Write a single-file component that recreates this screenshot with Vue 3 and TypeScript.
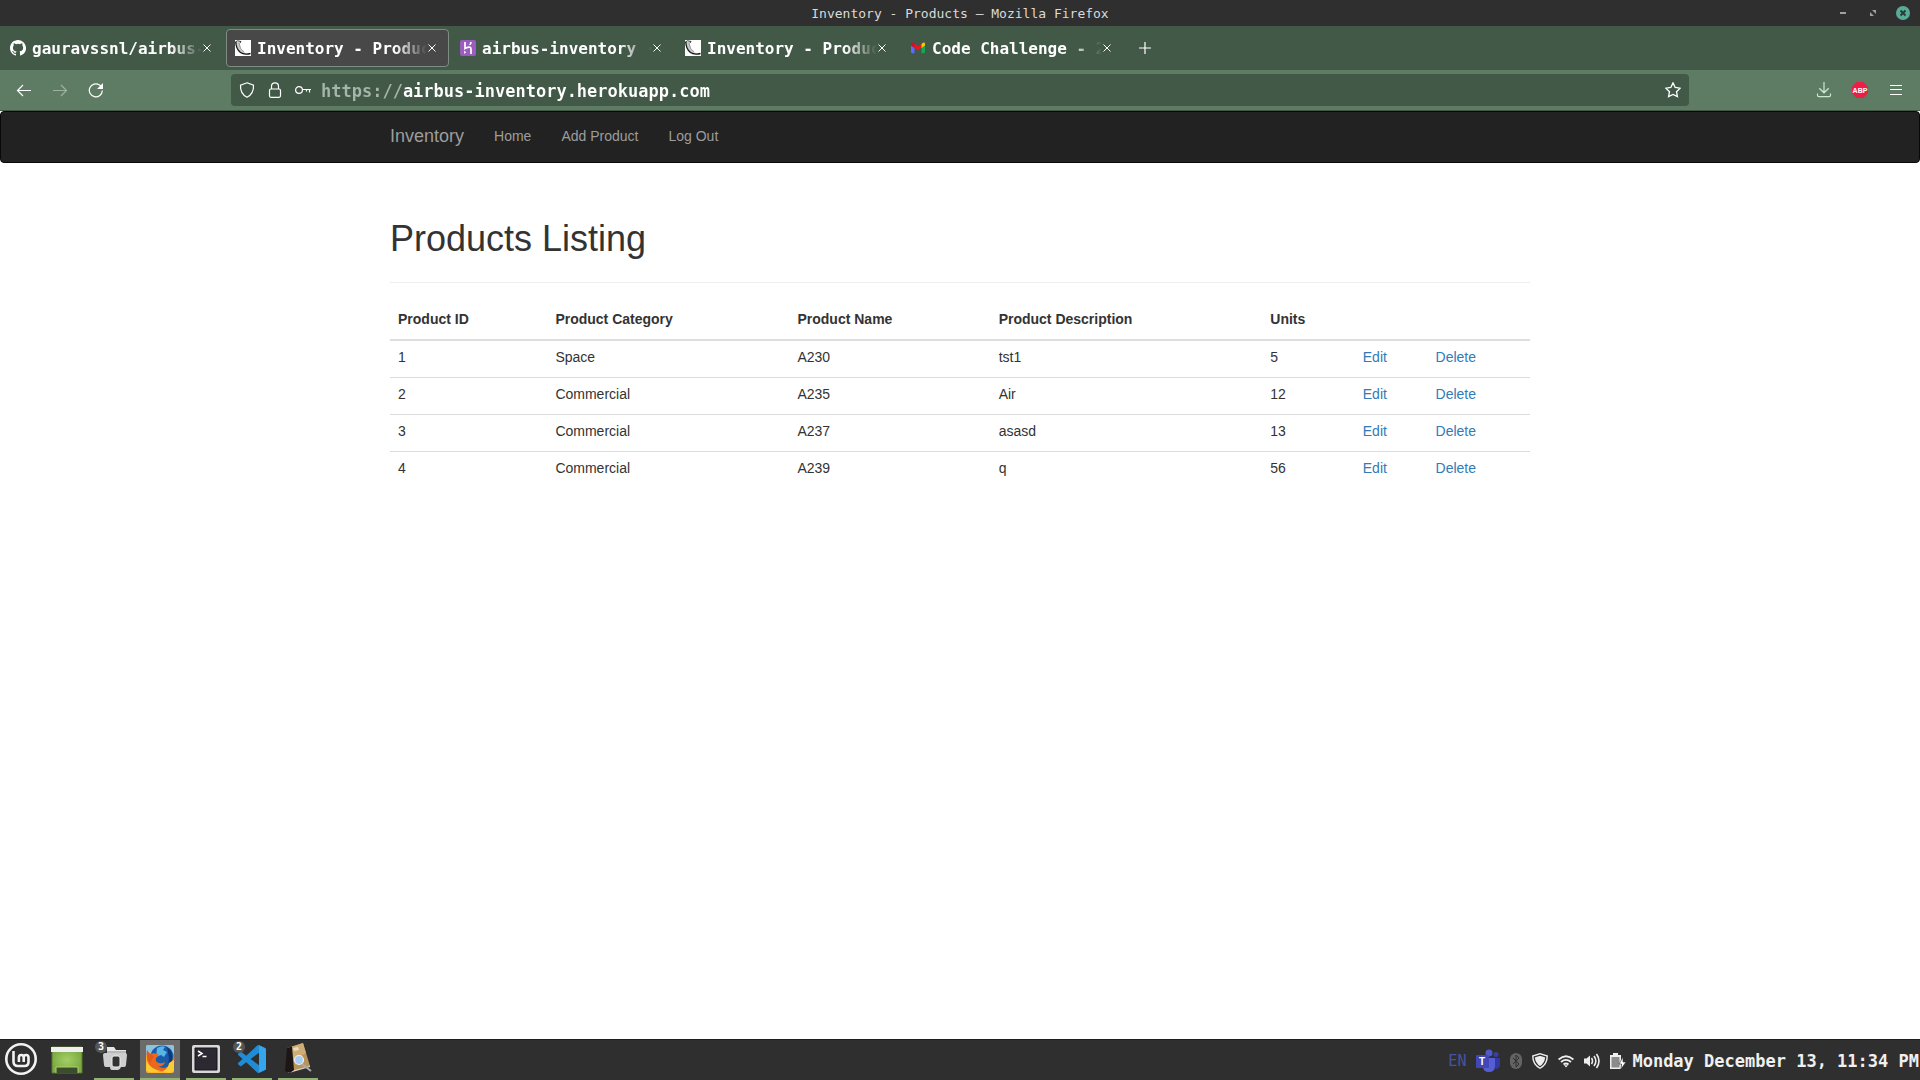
<script setup lang="ts">
import { ref } from 'vue'

interface Tab {
  title: string
  icon: 'github' | 'flask' | 'heroku' | 'gmail'
  active?: boolean
}

interface Product {
  id: number
  category: string
  name: string
  description: string
  units: number
}

const tabs: Tab[] = [
  { title: 'gauravssnl/airbus-', icon: 'github' },
  { title: 'Inventory - Produc', icon: 'flask', active: true },
  { title: 'airbus-inventory ·', icon: 'heroku' },
  { title: 'Inventory - Produc', icon: 'flask' },
  { title: 'Code Challenge - 2', icon: 'gmail' },
]

const columns = ['Product ID', 'Product Category', 'Product Name', 'Product Description', 'Units', '', '']

const products: Product[] = [
  { id: 1, category: 'Space', name: 'A230', description: 'tst1', units: 5 },
  { id: 2, category: 'Commercial', name: 'A235', description: 'Air', units: 12 },
  { id: 3, category: 'Commercial', name: 'A237', description: 'asasd', units: 13 },
  { id: 4, category: 'Commercial', name: 'A239', description: 'q', units: 56 },
]

const url = ref('https://airbus-inventory.herokuapp.com')
</script>

<template>
  <div class="desktop">
    <header class="titlebar">
      <span class="window-title">Inventory - Products — Mozilla Firefox</span>
      <div class="window-controls">
        <button type="button" aria-label="Minimize">
          <svg width="14" height="14" viewBox="0 0 14 14"><path d="M4 6h6v2H4z" fill="#a0a0a0" /></svg>
        </button>
        <button type="button" aria-label="Restore">
          <svg width="14" height="14" viewBox="0 0 14 14"><path d="M6 4h4v4zM4 6v4h4z" fill="#a0a0a0" /></svg>
        </button>
        <button type="button" aria-label="Close window">
          <svg width="14" height="14" viewBox="0 0 14 14">
            <circle cx="7" cy="7" r="7" fill="#58ab97" />
            <path d="M4.5 4.500l5 5M9.500 4.500l-5 5" stroke="#2b3c38" stroke-width="2" />
          </svg>
        </button>
      </div>
    </header>

    <nav class="tabs" aria-label="Browser tabs">
      <div v-for="(tab, i) in tabs" :key="i" class="tab" :class="{ active: tab.active }">
        <svg v-if="tab.icon === 'github'" width="16" height="16" viewBox="0 0 16 16">
          <path fill="#fff" d="M8 0C3.580 0 0 3.580 0 8c0 3.540 2.290 6.530 5.470 7.590.4.070.55-.17.55-.38v-1.490c-2.010.37-2.530-.49-2.690-.94-.09-.23-.48-.94-.82-1.130-.28-.15-.68-.52-.01-.53.63-.01 1.080.58 1.230.82.72 1.210 1.870.87 2.330.66.07-.52.28-.87.51-1.070-1.780-.2-3.640-.89-3.640-3.950 0-.87.31-1.590.82-2.150-.08-.2-.36-1.020.08-2.120 0 0 .67-.21 2.200.82a7.600 7.600 0 0 1 4 0c1.530-1.040 2.200-.82 2.200-.82.44 1.100.16 1.920.08 2.120.51.56.82 1.270.82 2.150 0 3.070-1.870 3.750-3.650 3.950.29.25.54.73.54 1.480v2.200c0 .21.15.46.55.38A8 8 0 0 0 8 0z" />
        </svg>
        <svg v-else-if="tab.icon === 'flask'" width="16" height="16" viewBox="0 0 16 16">
          <path fill="#fff" d="M0 0h16v16H0z" />
          <path d="M1 2Q1.500 9 6 12.500Q9 14.500 12 13.800Q8 12 6 9Q4.500 5 4.500 2z" fill="#c9c9c9" />
          <path d="M.8 2Q1 9 5.500 12.500Q9 15 15.500 13.500" fill="none" stroke="#111" stroke-width="1.300" />
          <path d="M4 3Q4.500 9 9 12" fill="none" stroke="#888" stroke-width=".8" />
          <path d="M0 2.300L2.500 .8 6 1.500 5 3" fill="none" stroke="#222" stroke-width=".9" />
        </svg>
        <svg v-else-if="tab.icon === 'heroku'" width="16" height="16" viewBox="0 0 16 16">
          <rect width="16" height="16" rx="2" fill="#9a5dbd" />
          <path d="M5 2v6.500Q11 5.500 11 9v5" fill="none" stroke="#fff" stroke-width="1.700" />
          <path d="M4.200 10.500v3.500l2-1.700zM10 2h1.800Q11.800 4 10.500 5H9Q10 4 10 2z" fill="#fff" />
        </svg>
        <svg v-else width="16" height="16" viewBox="0 0 16 16">
          <path d="M1 5v7q0 1.200 1.200 1.200H4.500V7z" fill="#5b6cff" />
          <path d="M11.500 7v6.200h2.300q1.200 0 1.200-1.200V5z" fill="#14a854" />
          <path d="M1 5V4q0-2 2-1.300L8 6.500l5-3.800v3L8 10.500z" fill="#f8101c" />
          <path d="M1 4q0-2 2-1.300L4.500 4v4L1 5.500z" fill="#c51430" />
          <path d="M11.500 4L13 2.700Q15 2 15 4v1.500L11.500 8z" fill="#ffc400" />
        </svg>
        <span class="tab-title">{{ tab.title }}</span>
        <button type="button" class="tab-close" :aria-label="`Close ${tab.title}`">
          <svg width="8" height="8" viewBox="0 0 8 8"><path d="M.5.5l7 7M7.500.5l-7 7" stroke="#fff" /></svg>
        </button>
      </div>
      <button type="button" class="new-tab" aria-label="New tab">
        <svg width="12" height="12" viewBox="0 0 12 12"><path d="M6 0v12M0 6h12" stroke="#fff" stroke-width="1.200" /></svg>
      </button>
    </nav>

    <div class="toolbar">
      <div class="tool-group">
        <button type="button" aria-label="Back">
          <svg width="16" height="16" viewBox="0 0 16 16"><path d="M15 8.500H1.500M7 3L1.500 8.500 7 14" /></svg>
        </button>
        <button type="button" aria-label="Forward" disabled>
          <svg width="16" height="16" viewBox="0 0 16 16"><path d="M1 8.500h13.500M9 3L14.500 8.500 9 14" /></svg>
        </button>
        <button type="button" aria-label="Reload">
          <svg width="16" height="16" viewBox="0 0 16 16">
            <path d="M14.300 8.500A6.500 6.500 0 1 1 11.500 3L14 5" />
            <path d="M15 1v6H9z" fill="#fff" stroke="none" />
          </svg>
        </button>
      </div>
      <div class="urlbar">
        <svg width="16" height="16" viewBox="0 0 16 16"><path d="M8 .8L14.500 3.200Q15 11.500 8 15.300 1 11.500 1.500 3.200z" /></svg>
        <svg width="16" height="16" viewBox="0 0 16 16">
          <rect x="2.500" y="7" width="11" height="8.300" rx="1.500" />
          <path d="M4.500 7V4.300a3.500 3.500 0 0 1 7 0V7" />
        </svg>
        <svg width="16" height="16" viewBox="0 0 16 16"><circle cx="4" cy="8" r="3.400" /><path d="M7.400 7.500H16M14.500 7.500v3M11.500 7.500v2" /></svg>
        <input v-model="url" class="url" type="text" aria-label="Address" spellcheck="false" />
        <button type="button" aria-label="Bookmark this page">
          <svg width="16" height="16" viewBox="0 0 16 16"><path d="M8 .9l2.200 4.600 5 .7-3.700 3.500.9 5L8 12.500l-4.400 2.200.9-5L.8 6.200l5-.7z" stroke-width="1.300" /></svg>
        </button>
      </div>
      <div class="tool-group end">
        <button type="button" aria-label="Downloads">
          <svg class="pale" width="16" height="16" viewBox="0 0 16 16"><path d="M8 0v10.500M3.300 6.200L8 10.800l4.700-4.600M1.500 11.500v1.700q0 1.500 1.500 1.500h10q1.500 0 1.500-1.500v-1.700" /></svg>
        </button>
        <button type="button" aria-label="Adblock Plus">
          <svg width="16" height="16" viewBox="0 0 16 16">
            <path d="M4.700 0h6.600L16 4.700v6.600L11.300 16H4.700L0 11.300V4.700z" fill="#ed1e45" stroke="none" />
            <text x="8" y="11" class="abp">ABP</text>
          </svg>
        </button>
        <button type="button" aria-label="Menu">
          <svg width="16" height="16" viewBox="0 0 16 16"><path d="M2 3.500h12M2 7.500h12M2 12.500h12" /></svg>
        </button>
      </div>
    </div>

    <main class="page">
      <nav class="navbar" aria-label="Main">
        <div class="container">
          <a class="brand" href="#">Inventory</a>
          <a href="#">Home</a>
          <a href="#">Add Product</a>
          <a href="#">Log Out</a>
        </div>
      </nav>
      <section class="container listing">
        <h1>Products Listing</h1>
        <table>
          <thead>
            <tr>
              <th v-for="(column, i) in columns" :key="i" scope="col">{{ column }}</th>
            </tr>
          </thead>
          <tbody>
            <tr v-for="p in products" :key="p.id">
              <td>{{ p.id }}</td>
              <td>{{ p.category }}</td>
              <td>{{ p.name }}</td>
              <td>{{ p.description }}</td>
              <td>{{ p.units }}</td>
              <td><a href="#">Edit</a></td>
              <td><a href="#">Delete</a></td>
            </tr>
          </tbody>
        </table>
      </section>
    </main>

    <footer class="taskbar">
      <div class="launchers">
        <div class="pinned">
          <button type="button" aria-label="Menu">
            <svg width="32" height="32" viewBox="0 0 32 32" fill="none" stroke="#f2f2f2">
              <circle cx="16" cy="16" r="14.700" stroke-width="2.600" />
              <path d="M8.500 8v10.500q0 4.500 4.500 4.500h6.500q4 0 4-4v-4.500q0-2.500-2.400-2.500t-2.400 2.500V19M18.700 14.500q0-2.500-2.400-2.500t-2.400 2.500V19" stroke-width="2.600" />
            </svg>
          </button>
          <button type="button" aria-label="Show desktop">
            <svg width="32" height="32" viewBox="0 0 32 32">
              <defs>
                <radialGradient id="desk"><stop offset="0" stop-color="#a4cf68" /><stop offset="1" stop-color="#7dab42" /></radialGradient>
              </defs>
              <path d="M1 4h30v26H1z" fill="url(#desk)" stroke="#567832" />
              <path d="M0 4h32v5H0z" fill="#efefef" />
              <path d="M5 30v-6h22v6" fill="#3b4d2b" stroke="#a9d571" />
            </svg>
          </button>
        </div>
        <button type="button" class="running" aria-label="Files">
          <svg width="32" height="32" viewBox="0 0 32 32">
            <path d="M9 4h7l2 3h10v6H9z" fill="#e6e6e6" />
            <path d="M5 12q0-2 2-2h20q2 0 2 2l-1 10q0 2-2 2h-3q-1 3-3 3h-6q-2 0-2-3H8q-2 0-2-2z" fill="#cecece" />
            <path d="M9 9h19" stroke="#8c8c8c" />
            <rect x="14" y="13" width="8" height="11" rx="2" fill="#333" stroke="#efefef" />
          </svg>
          <span class="badge">3</span>
        </button>
        <button type="button" class="running current" aria-label="Firefox">
          <svg width="32" height="32" viewBox="0 0 32 32">
            <rect x="2" y="2" width="28" height="28" rx="2" fill="#f9b62a" />
            <path d="M4 2h24q2 0 2 2v9H2V4q0-2 2-2z" fill="#8fc3dc" />
            <circle cx="18" cy="14" r="11.500" fill="#185caa" />
            <path d="M13 5q5-3 8-1l-2 3 4 2-3 5-3-2-5 2z" fill="#59b5e4" />
            <path d="M23 4q7 5 5 14l-4 5 1-8z" fill="#0b397b" />
            <path d="M3 7q0 4 4 4 4-2 8 1l-3 3q-1 4 3 5 3 1 6-1-1 5-7 4 8 5 13-3 3-5 2-10 4 9-3 15-7 5-15 3Q1 25 3 7z" fill="#ed671c" />
            <path d="M3 18q3 8 14 10-10 3-15-1zM25 20l5-3v11l-5 2-6-2q5-2 6-8z" fill="#ffcb32" />
            <path d="M3 7q3 5 7 6l-4 7q-4-5-3-13z" fill="#e2591c" />
          </svg>
        </button>
        <button type="button" class="running" aria-label="Terminal">
          <svg width="32" height="32" viewBox="0 0 32 32">
            <rect x="2" y="2" width="28" height="28" rx="2" fill="#d8d8d8" />
            <path d="M5 5h22v22H5z" fill="#2c2932" stroke="#17151a" />
            <path d="M8 8l4 2.500L8 13M12.500 13.500h4" fill="none" stroke="#fff" stroke-width="1.500" />
          </svg>
        </button>
        <button type="button" class="running" aria-label="Visual Studio Code">
          <svg width="28" height="28" viewBox="0 0 24 24">
            <path fill="#1f8cd6" d="M23.150 2.587L18.210.21a1.494 1.494 0 0 0-1.705.29l-9.460 8.630-4.120-3.128a.999.999 0 0 0-1.276.057L.327 7.261A1 1 0 0 0 .326 8.740L3.899 12 .326 15.260a1 1 0 0 0 .001 1.479L1.650 17.940a.999.999 0 0 0 1.276.057l4.120-3.128 9.460 8.630a1.492 1.492 0 0 0 1.704.290l4.942-2.377A1.500 1.500 0 0 0 24 20.060V3.939a1.500 1.500 0 0 0-.85-1.352zm-5.146 14.861L10.826 12l7.178-5.448v10.896z" />
            <path fill="#35a5ec" d="M18 .2l5.150 2.387q.85.400.85 1.352V20.060q0 .950-.85 1.352L18 23.800z" />
          </svg>
          <span class="badge">2</span>
        </button>
        <button type="button" class="running" aria-label="Log viewer">
          <svg width="32" height="32" viewBox="0 0 32 32">
            <path d="M4 27l3 3 21-6v-2L8 26z" fill="#ddd5c7" />
            <path d="M5 5L21 0l7 23-19 5z" fill="#b8935a" />
            <path d="M9 4l12-4 3 10-13 8z" fill="#cfae76" />
            <path d="M5 5l5-1.500L12 27l-4 3-5-2z" fill="#1c1715" />
            <path d="M11 5l5-1 1 3-5 1z" fill="#eadbbd" />
            <path d="M20 21l9 7" stroke="#aaa" stroke-width="2" />
            <circle cx="17" cy="17" r="4.500" fill="#a9cdf2" stroke="#f0f0f0" stroke-width="1.200" />
          </svg>
        </button>
      </div>

      <div class="tray">
        <div class="indicators">
          <span class="lang">EN</span>
          <svg width="24" height="24" viewBox="0 0 24 24">
            <circle cx="20" cy="5.500" r="2.500" fill="#3940a0" />
            <path d="M17 9h7v7q0 4-5 4z" fill="#3438a0" />
            <circle cx="13" cy="4" r="3.500" fill="#5059c9" />
            <path d="M8 9h11v8q0 6-6 6t-6-6z" fill="#565ed4" />
            <rect y="6" width="13" height="13" rx="1" fill="#4147b5" />
            <text x="6" y="16" class="teams">T</text>
          </svg>
          <svg width="12" height="16" viewBox="0 0 12 16">
            <rect width="12" height="16" rx="6" fill="#636363" />
            <path d="M3 5l6 6-3 3V2l3 3-6 6" fill="none" stroke="#2f2f2f" />
          </svg>
          <svg width="16" height="16" viewBox="0 0 16 16">
            <path d="M8 0l8 2.500Q16 12 8 16 0 12 0 2.500z" fill="#eee" />
            <path d="M8 2.200l5.800 1.800Q13.500 10.500 8 13.800 2.500 10.500 2.200 4z" fill="none" stroke="#2f2f2f" stroke-width="1.300" />
          </svg>
          <svg width="16" height="16" viewBox="0 0 16 16" fill="none" stroke="#eee" stroke-width="1.800">
            <path d="M.6 6.500Q8 0 15.400 6.500M3 9q5-4.200 10 0M5.500 11.500q2.500-2 5 0" />
            <path d="M6 12.300h4L8 14.500z" fill="#eee" stroke="none" />
          </svg>
          <svg width="16" height="16" viewBox="0 0 16 16" fill="none" stroke="#eee" stroke-width="1.600">
            <path d="M0 5.500h2.500L6 2.500v11l-3.500-3H0z" fill="#eee" stroke="none" />
            <path d="M7.500 5q2 3 0 6M10 3q3.700 5 0 10M12.500 1q5 7 0 14" />
          </svg>
          <svg width="16" height="16" viewBox="0 0 16 16">
            <path d="M0 2h3V0h5v2h3v14H0z" fill="#eee" />
            <path d="M1.500 4h8v10.500h-8z" fill="#8b8b8b" />
            <path d="M13 4l-4 7h2.500L11 16l5-7h-3z" fill="#fff" stroke="#2f2f2f" stroke-width=".6" />
          </svg>
        </div>
        <time class="clock">Monday December 13, 11:34 PM</time>
      </div>
    </footer>
  </div>
</template>

<style>
body {
  margin: 0;
}
</style>

<style scoped>
* {
  box-sizing: border-box;
}
.desktop {
  display: flex;
  flex-direction: column;
  min-height: 100vh;
  background: #fff;
  font-family: "DejaVu Sans Mono", "Liberation Mono", monospace;
}
button {
  display: flex;
  align-items: center;
  justify-content: center;
  padding: 0;
  border: 0;
  background: none;
  font-family: inherit;
}
svg {
  display: block;
  flex: none;
}
.titlebar {
  display: grid;
  grid-template-columns: 1fr auto 1fr;
  align-items: center;
  height: 26px;
  background: #2f2f2f;
  color: #dadada;
}
.window-title {
  grid-column: 2;
  padding-top: 2px;
  font-size: 13px;
  line-height: 24px;
}
.window-controls {
  display: flex;
  justify-content: flex-end;
  gap: 16px;
  padding-right: 10px;
}
.tabs {
  display: flex;
  align-items: center;
  height: 44px;
  background: #425948;
}
.tab {
  display: flex;
  align-items: center;
  flex: 0 1 223px;
  min-width: 0;
  height: 38px;
  margin: 0 1px;
  padding: 0 8px;
  border: 1px solid transparent;
  border-radius: 4px;
  color: #fff;
}
.tab.active {
  border-color: #7d8d81;
  background: #484848;
}
.tab-title {
  flex: 1;
  min-width: 0;
  margin-left: 6px;
  padding-top: 2px;
  overflow: hidden;
  white-space: nowrap;
  font-size: 16px;
  font-weight: 700;
  line-height: 24px;
  mask-image: linear-gradient(to left, transparent, #000 32px);
}
.tab-close {
  width: 10px;
  height: 24px;
  margin-right: 3px;
}
.new-tab {
  width: 36px;
  height: 36px;
  margin-left: 2px;
}
.toolbar {
  display: grid;
  grid-template-columns: 231px 1fr 231px;
  align-items: center;
  height: 41px;
  border-bottom: 1px solid #425948;
  background: #5e7c64;
}
.toolbar svg {
  fill: none;
  stroke: #fff;
  stroke-width: 1.2;
}
.toolbar .pale {
  stroke: #c8eccf;
}
.tool-group {
  display: flex;
  padding: 0 6px;
}
.tool-group.end {
  justify-content: flex-end;
}
.tool-group button {
  width: 36px;
  height: 32px;
}
.tool-group button:disabled {
  opacity: 0.4;
}
.toolbar .abp {
  fill: #fff;
  stroke: none;
  font: 700 7px "Liberation Sans", sans-serif;
  text-anchor: middle;
}
.urlbar {
  display: flex;
  align-items: center;
  gap: 12px;
  height: 32px;
  padding: 0 8px;
  border-radius: 4px;
  background: #425948;
}
.url {
  flex: 1;
  min-width: 0;
  height: 32px;
  margin-left: -2px;
  padding: 2px 0 0;
  border: 0;
  outline: 0;
  background: linear-gradient(90deg, #a5b5a9 8ch, #fff 8ch);
  background-clip: text;
  color: transparent;
  font-family: inherit;
  font-size: 17px;
  font-weight: 700;
}
.page {
  flex: 1;
  color: #333;
  font-family: "Liberation Sans", Arial, sans-serif;
  font-size: 14px;
  line-height: 20px;
}
.container {
  width: 100%;
  max-width: 1170px;
  margin: 0 auto;
  padding: 0 15px;
}
.navbar {
  border: 1px solid #080808;
  border-radius: 4px;
  background: #222;
}
.navbar .container {
  display: flex;
  gap: 30px;
}
.navbar a {
  padding: 14px 0 16px;
  color: #9d9d9d;
  text-decoration: none;
}
.navbar .brand {
  font-size: 18px;
}
.listing {
  padding-top: 56px;
}
h1 {
  margin: 0 0 20px;
  padding-bottom: 23px;
  border-bottom: 1px solid #eee;
  font-size: 36px;
  font-weight: 400;
  line-height: 40px;
}
table {
  width: 100%;
  border-collapse: collapse;
}
th,
td {
  padding: 6px 8px 10px;
  border-top: 1px solid #ddd;
  text-align: left;
  vertical-align: top;
}
th {
  border-top: 0;
  border-bottom: 2px solid #ddd;
}
td a {
  color: #337ab7;
  text-decoration: none;
}
.taskbar {
  display: flex;
  justify-content: space-between;
  height: 41px;
  border-top: 1px solid #1d1d1d;
  background: #2f2f2f;
}
.launchers {
  display: flex;
  gap: 6px;
}
.pinned {
  display: flex;
  gap: 6px;
  padding: 0 1px;
}
.launchers button {
  position: relative;
  width: 40px;
  height: 40px;
  border-bottom: 2px solid transparent;
}
.launchers .running {
  border-bottom-color: #92b372;
}
.launchers .current {
  background-color: #6b6b6b;
}
.badge {
  position: absolute;
  top: 1px;
  left: 1px;
  width: 12px;
  height: 12px;
  border-radius: 6px;
  background: #555;
  color: #fff;
  font-size: 10px;
  font-weight: 700;
  line-height: 12px;
}
.tray {
  display: flex;
  align-items: center;
  gap: 6px;
  padding: 2px 1px 0 0;
  color: #f0f0f0;
}
.indicators {
  display: flex;
  align-items: center;
  gap: 10px;
}
.lang {
  color: #4654a0;
  font-size: 15px;
}
.teams {
  fill: #fff;
  font: 700 10px "Liberation Sans", sans-serif;
  text-anchor: middle;
}
.clock {
  font-size: 17px;
  font-weight: 700;
  white-space: nowrap;
}
</style>
